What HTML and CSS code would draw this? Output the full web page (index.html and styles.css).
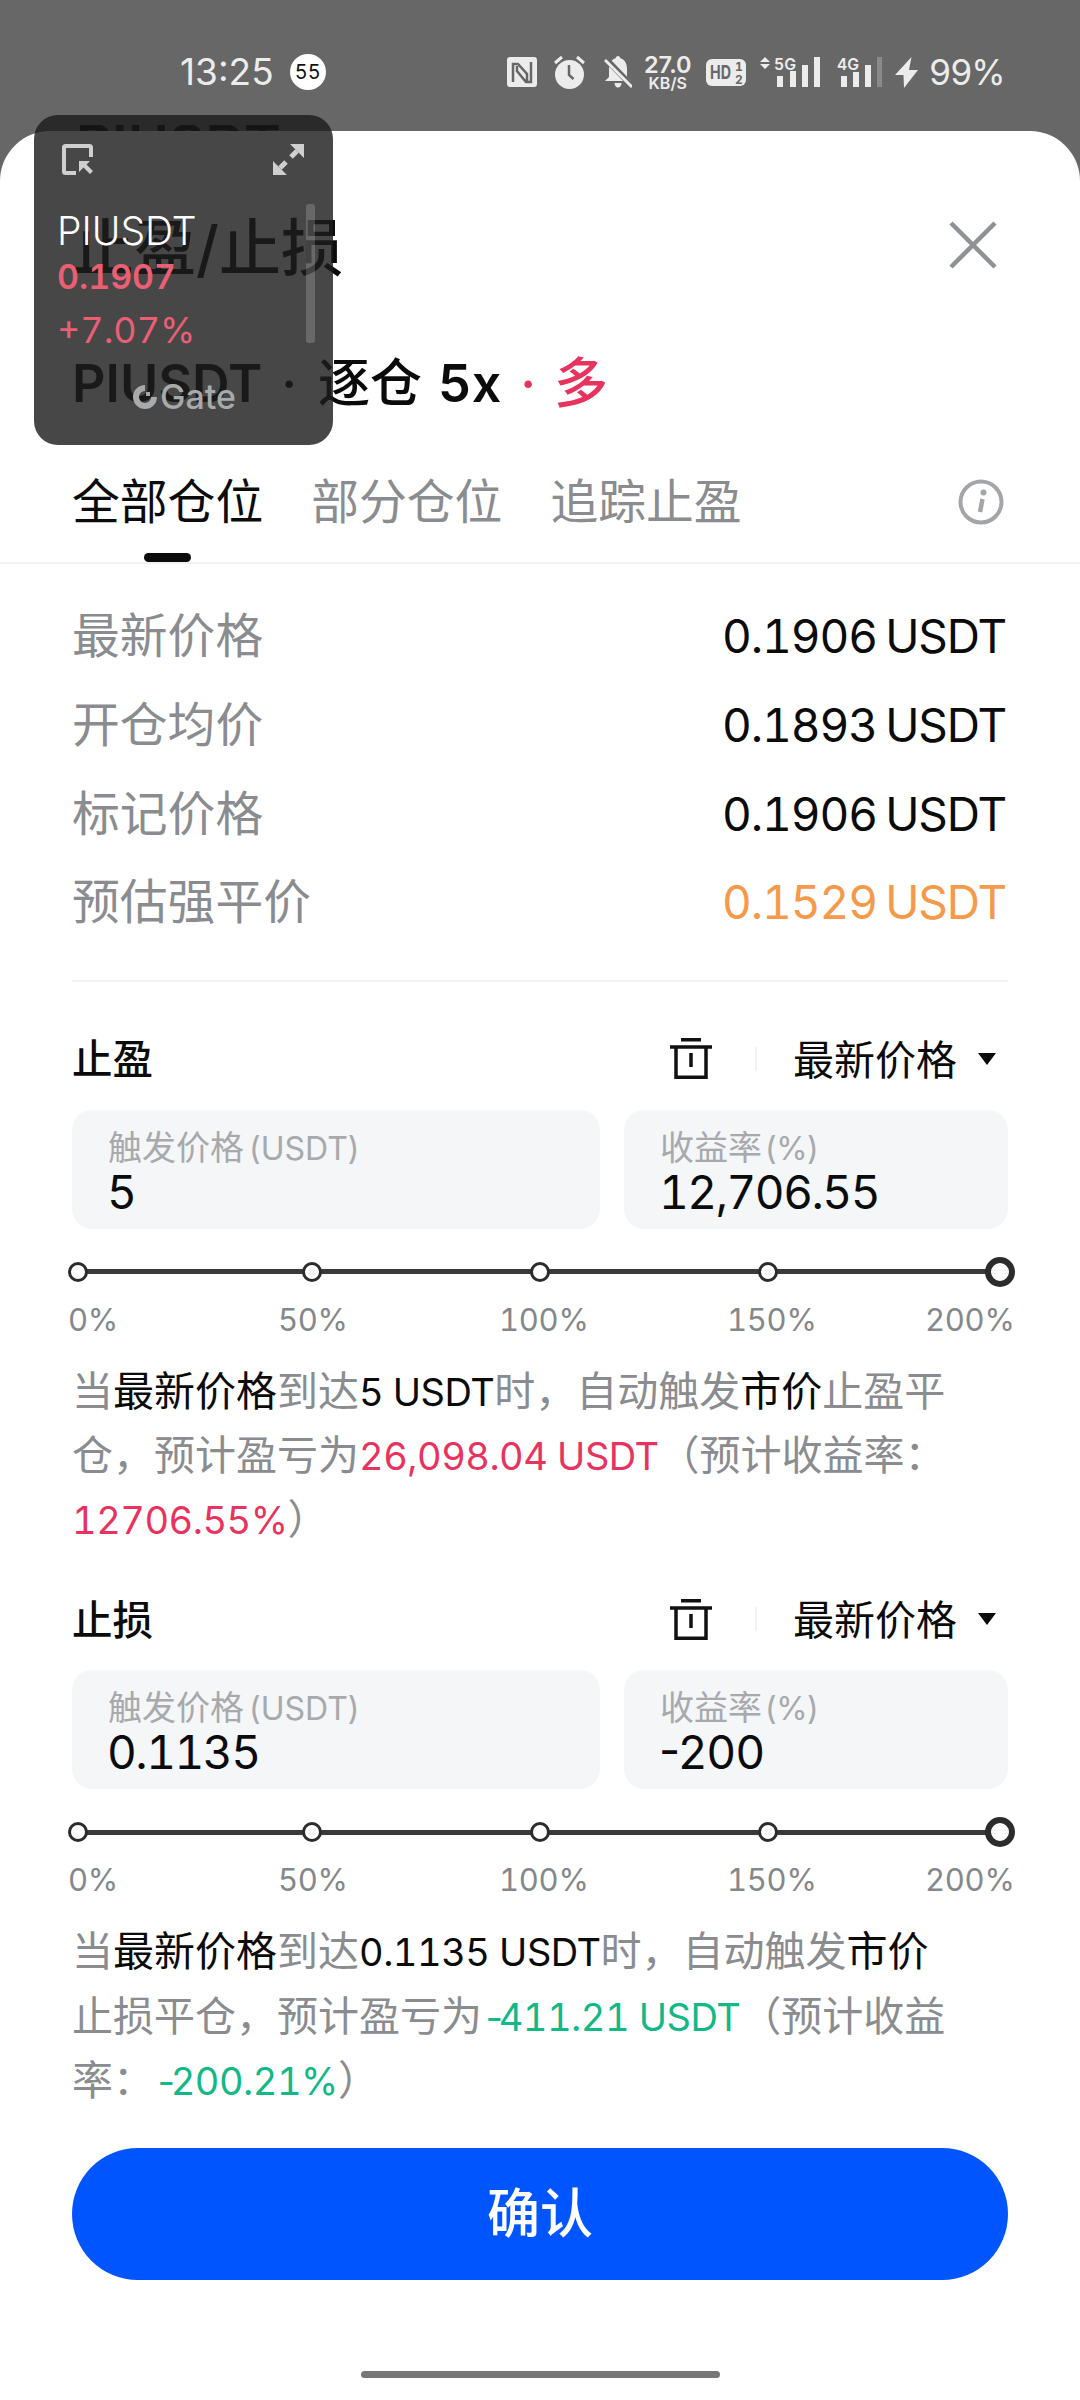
FILE: index.html
```html
<!DOCTYPE html>
<html>
<head lang="zh">
    <meta charset="UTF-8">
    <title>止盈/止损</title>
    <link rel="stylesheet" href="styles.css">
</head>
<body>
<div id="page">

    <div id="status">
        <span class="time">13:25</span>
        <span class="badge">55</span>
        <span class="status-right">
            <svg class="ic-nfc" width="30" height="30" viewBox="0 0 30 30"><rect width="30" height="30" rx="3" fill="#ececec"/><path d="M6 25V7h5l9 10v7M24 5v20h-5L10 14V9" fill="none" stroke="#676767" stroke-width="2.500"/></svg>
            <svg class="ic-alarm" width="31" height="34" viewBox="0 0 31 34"><circle cx="15.500" cy="19.500" r="14.500" fill="#ececec"/><path d="M15 10v10l4.500 4" fill="none" stroke="#676767" stroke-width="2.500"/><path d="M1 8l7-6M30 8l-7-6" stroke="#ececec" stroke-width="3" fill="none"/></svg>
            <svg class="ic-bell" width="28" height="34" viewBox="0 0 28 34"><path d="M14 1c1.300 0 2.300 1 2.300 2.300C21 4.500 23 9 23 14v8l4 4H1l4-4v-8c0-5 2-9.500 6.700-10.700C11.700 2 12.700 1 14 1zM10.500 28h7c0 2.500-1.500 4.500-3.500 4.500s-3.500-2-3.500-4.500z" fill="#ececec"/><path d="M1 3l27 28" stroke="#676767" stroke-width="6"/><path d="M1 5l27 27" stroke="#ececec" stroke-width="3"/></svg>
            <span class="speed"><b>27.0</b><i>KB/S</i></span>
            <svg class="ic-hd" width="40" height="27" viewBox="0 0 40 27"><rect width="40" height="27" rx="6" fill="#ececec"/><text x="4" y="20" class="hd-txt" textLength="21" lengthAdjust="spacingAndGlyphs">HD</text><text x="29" y="12" class="hd-sm">1</text><text x="29" y="25" class="hd-sm">2</text></svg>
            <svg class="ic-sig1" width="62" height="36" viewBox="0 -2 62 36"><path d="M6 1l5 5H1zM6 13l5-5H1z" fill="#ececec"/><text x="15" y="14" class="sig-txt" textLength="22" lengthAdjust="spacingAndGlyphs">5G</text><g fill="#ececec"><rect x="18" y="20" width="6" height="11"/><rect x="31" y="15" width="6" height="16"/><rect x="43" y="9" width="6" height="22"/><rect x="55" y="1" width="6" height="30"/></g></svg>
            <svg class="ic-sig2" width="45" height="36" viewBox="0 -2 45 36"><text x="0" y="14" class="sig-txt" textLength="22" lengthAdjust="spacingAndGlyphs">4G</text><g fill="#ececec"><rect x="4" y="20" width="6" height="11"/><rect x="16" y="16" width="6" height="15"/><rect x="28" y="9" width="6" height="22"/></g><rect x="40" y="1" width="5" height="30" fill="#8a8a8a"/></svg>
            <svg class="ic-bolt" width="23" height="31" viewBox="0 0 23 31"><path d="M16.500 0L0 18h8.500L9 31 23 13h-9z" fill="#ececec"/></svg>
            <span class="batt">99%</span>
        </span>
    </div>

    <div id="sheet">
        <div class="head">
            <span class="title">止盈/止损</span>
            <svg class="close" width="48" height="48" viewBox="0 0 48 48"><path d="M2 2l44 44M46 2L2 46" stroke="#8f9295" stroke-width="4.500" fill="none"/></svg>
        </div>
        <div class="sub"><b>PIUSDT</b><span class="dot">·</span><span>逐仓</span><b class="lev">5x</b><em class="dot pink">·</em><em class="duo">多</em></div>

        <div class="tabs">
            <span class="tab selected">全部仓位</span>
            <span class="tab">部分仓位</span>
            <span class="tab">追踪止盈</span>
            <svg class="info" width="46" height="46" viewBox="0 0 46 46"><circle cx="23" cy="23" r="20.500" fill="none" stroke="#a3a5a8" stroke-width="4"/><path d="M24.500 20l-2.500 13" stroke="#a3a5a8" stroke-width="4.500" fill="none"/><circle cx="25.500" cy="13.500" r="3" fill="#a3a5a8"/></svg>
        </div>

        <div class="rows">
            <div class="row"><span>最新价格</span><b>0.1906 USDT</b></div>
            <div class="row"><span>开仓均价</span><b>0.1893 USDT</b></div>
            <div class="row"><span>标记价格</span><b>0.1906 USDT</b></div>
            <div class="row"><span>预估强平价</span><b class="orange">0.1529 USDT</b></div>
        </div>

        <div class="section">
            <div class="sec-head">
                <span class="sec-name">止盈</span>
                <svg class="trash" width="42" height="41" viewBox="0 0 42 41"><path d="M11 1.800h20M0 9h42M6 9v30.200h30V9M21 15v14" stroke="#111" stroke-width="3.500" fill="none"/></svg>
                <i class="sep"></i>
                <span class="sec-type">最新价格</span>
                <i class="tri"></i>
            </div>
            <div class="inputs">
                <div class="box box-l"><label>触发价格<small>(USDT)</small></label><span>5</span></div>
                <div class="box box-r"><label>收益率<small>(%)</small></label><span>12,706.55</span></div>
            </div>
            <div class="slider"><i></i><i></i><i></i><i></i><i class="end"></i></div>
            <div class="marks"><span>0%</span><span>50%</span><span>100%</span><span>150%</span><span>200%</span></div>
            <p class="desc">当<b>最新价格</b>到达<b class="num">5 USDT</b>时，自动触发<b>市价</b>止盈平<br>仓，预计盈亏为<em class="red num">26,098.04 USDT</em>（预计收益率：<br><em class="red num">12706.55%</em>）</p>
        </div>

        <div class="section second">
            <div class="sec-head">
                <span class="sec-name">止损</span>
                <svg class="trash" width="42" height="41" viewBox="0 0 42 41"><path d="M11 1.800h20M0 9h42M6 9v30.200h30V9M21 15v14" stroke="#111" stroke-width="3.500" fill="none"/></svg>
                <i class="sep"></i>
                <span class="sec-type">最新价格</span>
                <i class="tri"></i>
            </div>
            <div class="inputs">
                <div class="box box-l"><label>触发价格<small>(USDT)</small></label><span>0.1135</span></div>
                <div class="box box-r"><label>收益率<small>(%)</small></label><span class="plain">-200</span></div>
            </div>
            <div class="slider"><i></i><i></i><i></i><i></i><i class="end"></i></div>
            <div class="marks"><span>0%</span><span>50%</span><span>100%</span><span>150%</span><span>200%</span></div>
            <p class="desc">当<b>最新价格</b>到达<b class="num">0.1135 USDT</b>时，自动触发<b>市价</b><br>止损平仓，预计盈亏为<em class="green num"><u>-</u>411.21 USDT</em>（预计收益<br>率：<em class="green num"><u>-</u>200.21%</em>）</p>
        </div>

        <div class="confirm">确认</div>
        <div class="home"></div>
    </div>

    <!-- floating price window, lies over the sheet -->
    <div id="float">
        <div class="ghost">PIUSDT</div>
        <div class="float-icons">
            <svg width="31" height="31" viewBox="0 0 31 31"><path d="M14 29H3.500a1.500 1.500 0 0 1-1.500-1.500V3.500A1.500 1.500 0 0 1 3.500 2h24A1.500 1.500 0 0 1 29 3.500V13" fill="none" stroke="#cfcfcf" stroke-width="4"/><path d="M17 17h11l-3.500 3.500L31 27l-3 3-6.500-6.500L17 28z" fill="#cfcfcf"/></svg>
            <svg width="31" height="31" viewBox="0 0 31 31"><path d="M17 0h14v14zM0 17v14h14z" fill="#cfcfcf"/><path d="M24 7l-6 6M13 18l-6 6" stroke="#cfcfcf" stroke-width="5" fill="none"/></svg>
        </div>
        <div class="f-name">PIUSDT</div>
        <div class="f-price">0.1907</div>
        <div class="f-pct">+7.07%</div>
        <div class="f-logo">
            <svg width="24" height="24" viewBox="0 0 24 24"><path d="M12 3a9 9 0 1 0 9 9" fill="none" stroke="#a8a9aa" stroke-width="6"/><rect x="13" y="7" width="4" height="4" fill="#a8a9aa"/></svg>
            <span>Gate</span>
        </div>
        <i class="f-bar"></i>
    </div>

</div>
</body>
</html>
```

FILE: styles.css
```css
*{
    margin: 0;
    padding: 0;
    box-sizing: border-box;
}

body{
    background: #676767;
    font-family: Inter, "Noto Sans CJK SC", sans-serif;
    font-variant-numeric: tabular-nums;
}

i, em{
    font-style: normal;
}

#page{
    width: 1080px;
    height: 2400px;
    position: relative;
    overflow: hidden;
    background: #676767;
}

/* status bar */
#status{
    height: 131px;
    padding: 50px 76px 0 180px;
    display: flex;
    align-items: flex-start;
    color: #ececec;
}
.time{
    font-size: 37px;
    line-height: 44px;
    font-weight: 400;
    font-variant-numeric: normal;
}
.badge{
    width: 36px;
    height: 36px;
    margin: 4px 0 0 16px;
    border-radius: 50%;
    background: #fff;
    color: #111;
    font-size: 20px;
    line-height: 36px;
    text-align: center;
}
.status-right{
    margin-left: auto;
    display: flex;
    align-items: center;
    height: 44px;
}
.ic-alarm{ margin-left: 17px; }
.ic-bell{ margin-left: 19px; }
.speed{
    margin-left: 13px;
    width: 46px;
    display: flex;
    flex-direction: column;
    align-items: center;
    color: #ececec;
    font-variant-numeric: normal;
}
.speed b{
    font-size: 23.500px;
    line-height: 22px;
    font-weight: 600;
}
.speed i{
    font-size: 16px;
    line-height: 15px;
    font-weight: 600;
}
.ic-hd{ margin-left: 15px; }
.hd-txt{
    font-size: 19px;
    font-weight: 700;
    fill: #676767;
}
.hd-sm{
    font-size: 12px;
    font-weight: 700;
    fill: #676767;
}
.sig-txt{
    font-size: 16px;
    font-weight: 600;
    fill: #ececec;
}
.ic-sig1{ margin-left: 13px; }
.ic-sig2{ margin-left: 16px; }
.ic-bolt{ margin-left: 13px; }
.batt{
    margin-left: 11px;
    font-size: 35px;
    line-height: 44px;
    font-weight: 400;
    letter-spacing: -1.500px;
}

/* sheet */
#sheet{
    height: 2269px;
    padding: 82px 72px 0;
    background: #fff;
    border-radius: 50px 50px 0 0;
    color: #0b0b0b;
}
.head{
    height: 70px;
    display: flex;
    align-items: center;
    justify-content: space-between;
}
.title{
    font-size: 62px;
    line-height: 70px;
    font-weight: 500;
    padding-top: 2px;
}
.close{
    margin: 0 11px 6px 0;
}
.sub{
    margin-top: 68px;
    height: 64px;
    padding-top: 2px;
    display: flex;
    align-items: center;
    font-size: 52px;
    line-height: 64px;
    font-weight: 500;
    white-space: nowrap;
}
.sub b{
    font-weight: 600;
}
.sub .lev{
    margin: 0 0 0 16px;
}
.sub .dot{
    margin: 0 21px 0 19px;
}
.sub .pink{
    margin: 0 18px 0 19px;
}
.sub em{
    color: #e8335f;
}
.sub .duo{
    font-size: 54px;
}

.tabs{
    margin: 55px -72px 0;
    padding: 0 72px 26px;
    height: 94px;
    display: flex;
    gap: 48px;
    align-items: flex-start;
    border-bottom: 2px solid #f0f1f2;
}
.tab{
    position: relative;
    font-size: 47.800px;
    line-height: 64px;
    color: #8a8c8f;
}
.tab.selected{
    color: #0b0b0b;
}
.tab.selected:after{
    content: "";
    position: absolute;
    left: 72px;
    top: 83px;
    width: 47px;
    height: 9px;
    border-radius: 5px;
    background: #0b0b0b;
}
.info{
    margin: 9px 4px 0 auto;
}

.rows{
    padding: 27px 0 34px;
    border-bottom: 2px solid #f0f1f2;
}
.row{
    height: 88.700px;
    display: flex;
    align-items: center;
    justify-content: space-between;
}
.row span{
    font-size: 47.800px;
    color: #8a8c8f;
    padding-bottom: 5px;
}
.row b{
    font-size: 46px;
    font-weight: 400;
    margin-right: 2px;
    padding-top: 2px;
    letter-spacing: -1.100px;
    word-spacing: -3px;
}
.row .orange{
    color: #f59a4b;
}

.section{
    margin-top: 47px;
}
.section.second{
    margin-top: 38px;
}
.sec-head{
    height: 60px;
    display: flex;
    align-items: center;
    font-size: 41px;
}
.sec-head span{
    padding-bottom: 4px;
}
.sec-name{
    font-weight: 500;
    font-size: 40.500px;
    margin-right: auto;
}
.trash{
    margin-right: 43px;
}
.sep{
    width: 2px;
    height: 24px;
    background: #f0f1f2;
    margin-right: 36px;
}
.tri{
    margin: 0 12px 0 21px;
    border-style: solid;
    border-width: 12px 9px 0;
    border-color: #0b0b0b transparent transparent;
}

.inputs{
    margin-top: 21px;
    display: flex;
    gap: 24px;
}
.box{
    height: 119px;
    padding: 18px 0 0 36px;
    border-radius: 20px;
    background: #f4f6f8;
    display: flex;
    flex-direction: column;
}
.box-l{
    width: 528px;
}
.box-r{
    width: 384px;
}
.box label{
    font-size: 34px;
    line-height: 40px;
    color: #a7a9ac;
}
.box small{
    font-size: 32px;
    margin-left: 5px;
    font-variant-numeric: normal;
}
.box-r small{
    margin-left: 3px;
    letter-spacing: -0.500px;
}
.box span{
    font-size: 46px;
    line-height: 46px;
    margin-left: -1px;
    letter-spacing: -1.500px;
}
.box .plain{
    letter-spacing: 0;
    font-variant-numeric: normal;
}

.slider{
    margin: 28px 0 0 -4px;
    height: 30px;
    width: 947px;
    display: grid;
    grid-template-columns: 234px 228px 228px 227px 30px;
    align-items: center;
    background: linear-gradient(#3a3a3a, #3a3a3a) no-repeat 10px center / 925px 5px;
}
.slider i{
    width: 20px;
    height: 20px;
    border: 3px solid #2c2c2c;
    border-radius: 50%;
    background: #fff;
}
.slider i.end{
    width: 30px;
    height: 30px;
    border-width: 6px;
}

.marks{
    margin: 13px 0 0 -4px;
    height: 40px;
    display: grid;
    grid-template-columns: 210px 221px 228px 198px auto;
    font-size: 31px;
    line-height: 40px;
    letter-spacing: -0.300px;
    color: #85888b;
}

.desc{
    margin-top: 19px;
    font-size: 41px;
    line-height: 64.200px;
    color: #8a8c8f;
    white-space: nowrap;
}
.desc b{
    font-weight: 400;
    color: #0b0b0b;
}
.desc .num{
    font-size: 38px;
    line-height: 40px;
    letter-spacing: -0.500px;
}
.desc u{
    text-decoration: none;
    letter-spacing: -10px;
    margin-right: 2px;
}
.red{
    color: #e8335f;
}
.green{
    color: #12b886;
}

.confirm{
    margin-top: 36px;
    height: 132px;
    border-radius: 66px;
    background: #0055ff;
    color: #fff;
    font-size: 53px;
    line-height: 132px;
    font-weight: 500;
    text-align: center;
}
.home{
    margin: 91px auto 0;
    width: 359px;
    height: 7px;
    border-radius: 4px;
    background: #777;
}

/* floating window */
#float{
    position: absolute;
    left: 34px;
    top: 115px;
    width: 299px;
    height: 330px;
    padding: 0 0 0 23px;
    border-radius: 24px;
    background: rgba(28,28,28,0.81);
    overflow: hidden;
}
.ghost{
    position: absolute;
    left: 42px;
    top: 10px;
    height: 6px;
    font-size: 56px;
    line-height: 40px;
    font-weight: 600;
    color: #141516;
    overflow: hidden;
}
.float-icons{
    position: relative;
    display: flex;
    justify-content: space-between;
    width: 247px;
    padding: 29px 0 0 5px;
}
.f-name{
    margin-top: 33px;
    font-size: 39px;
    line-height: 46px;
    font-weight: 300;
    color: #fff;
}
.f-price{
    margin-top: 0;
    font-size: 34px;
    line-height: 46px;
    font-weight: 600;
    color: #ea5f73;
}
.f-pct{
    margin-top: 7px;
    font-size: 36px;
    line-height: 46px;
    color: #ea5f73;
}
.f-logo{
    position: absolute;
    left: 99px;
    top: 270px;
    display: flex;
    align-items: center;
    gap: 3px;
    font-size: 34px;
    line-height: 24px;
    font-weight: 500;
    color: #a8a9aa;
}
.f-bar{
    position: absolute;
    left: 272px;
    top: 89px;
    width: 9px;
    height: 139px;
    border-radius: 3px;
    background: rgba(255,255,255,0.18);
}
```
